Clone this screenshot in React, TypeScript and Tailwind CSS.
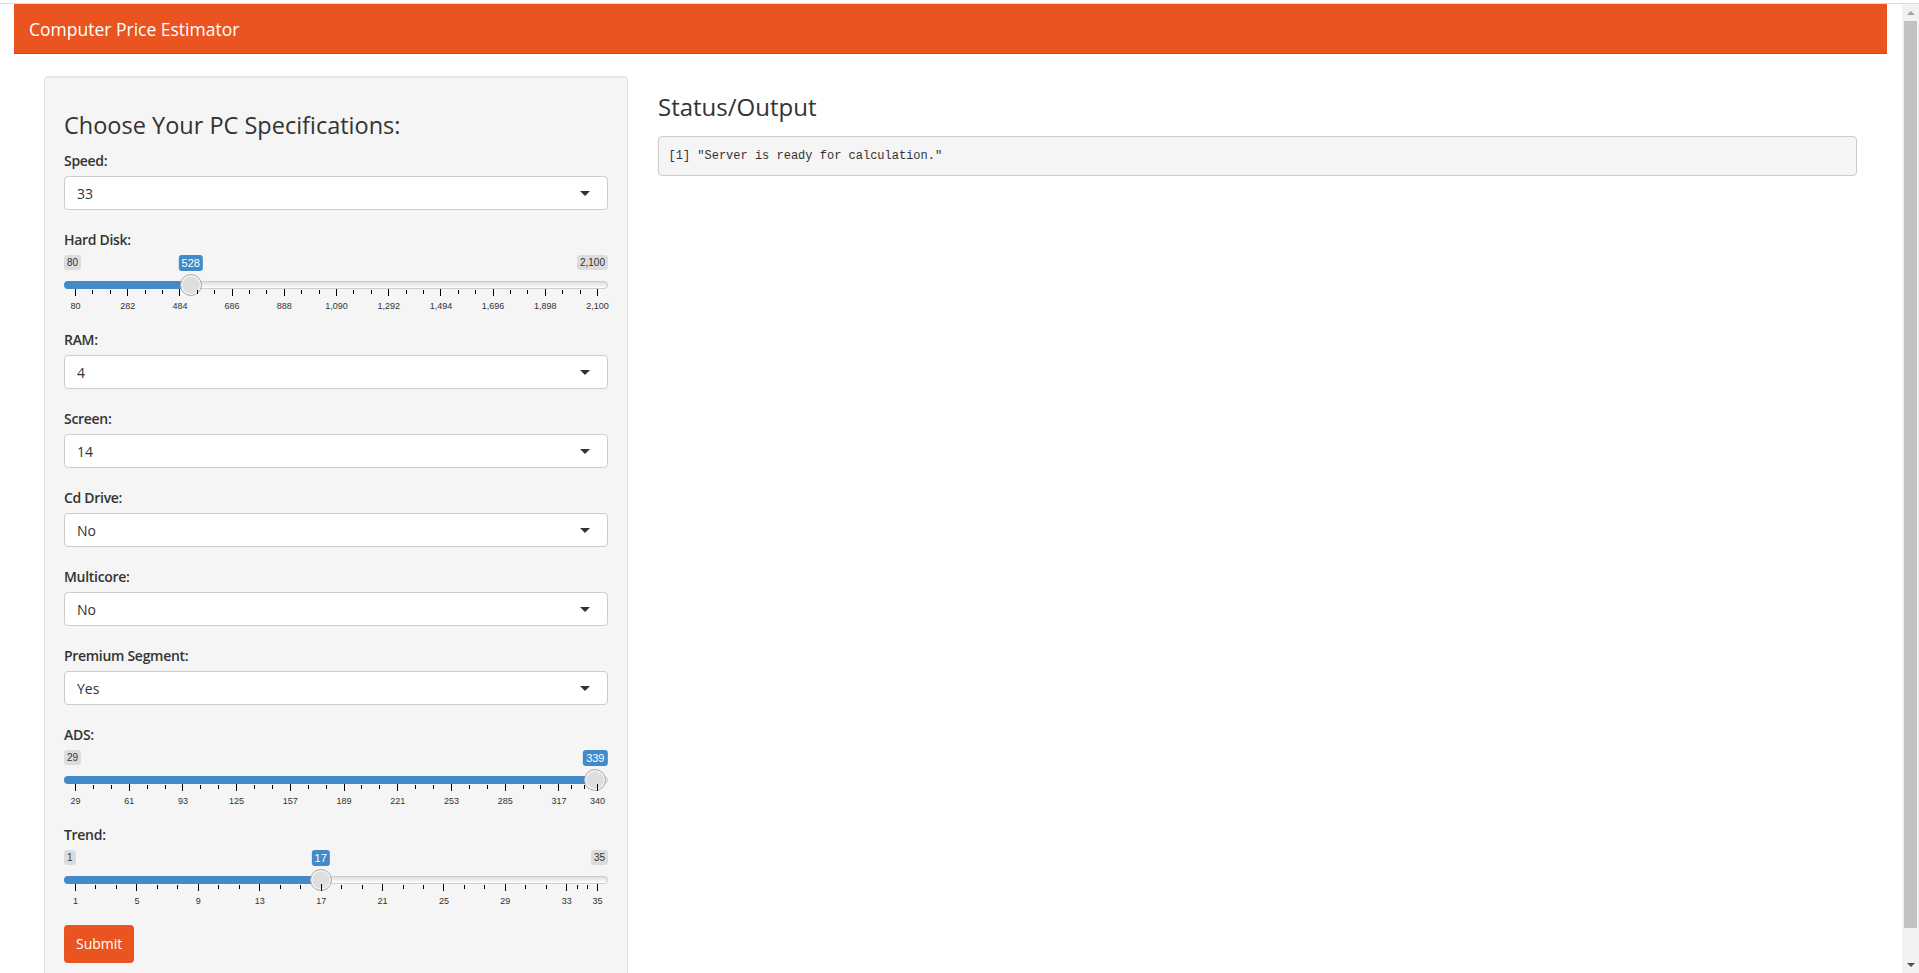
import React from 'react';

const SANS = { fontFamily: '"Open Sans", "Liberation Sans", sans-serif' };

type SliderProps = {
  min: number;
  max: number;
  value: number;
  majors: number[];
  hideMax?: boolean;
};

const fmt = (v: number) => v.toLocaleString('en-US');

function RangeSlider({ min, max, value, majors, hideMax }: SliderProps) {
  const width = 544;
  const pad = 11;
  const pos = (v: number) => pad + ((v - min) / (max - min)) * (width - pad * 2);
  const hx = pos(value);

  const minors: number[] = [];
  for (let i = 0; i < majors.length - 1; i++) {
    const a = pos(majors[i]);
    const b = pos(majors[i + 1]);
    minors.push(a + (b - a) / 3, a + ((b - a) * 2) / 3);
  }

  return (
    <div className="relative h-[60px] w-[544px]" style={{ fontFamily: '"Liberation Sans", Arial, sans-serif' }}>
      <span className="absolute left-0 top-0 rounded-[3px] bg-black/10 px-[3px] py-[1px] text-[10px] leading-[13.3px] text-[#333]">
        {fmt(min)}
      </span>
      {!hideMax && (
        <span className="absolute right-0 top-0 rounded-[3px] bg-black/10 px-[3px] py-[1px] text-[10px] leading-[13.3px] text-[#333]">
          {fmt(max)}
        </span>
      )}
      <span
        className="absolute top-0 -translate-x-1/2 rounded-[3px] bg-[#428bca] px-[3px] py-[1px] text-[11px] leading-[14px] text-white"
        style={{ left: hx }}
      >
        {fmt(value)}
      </span>

      <div className="absolute left-0 right-0 top-[26px] h-[8px] rounded-full border border-[#ccc] bg-gradient-to-b from-[#dedede] to-white" />
      <div className="absolute left-0 top-[26px] h-[8px] rounded-l-full bg-[#428bca]" style={{ width: hx }} />
      <div
        className="absolute top-[19px] h-[22px] w-[22px] -translate-x-1/2 rounded-full border border-[#ababab] bg-[#dedede] shadow-[inset_0_0_1px_1px_#fff]"
        style={{ left: hx }}
      />

      {majors.map((m) => (
        <React.Fragment key={m}>
          <div className="absolute top-[34px] h-[7px] w-px bg-black" style={{ left: pos(m) }} />
          <span
            className="absolute top-[46px] -translate-x-1/2 text-[9px] leading-[10px] text-[#333]"
            style={{ left: pos(m) + 0.5 }}
          >
            {fmt(m)}
          </span>
        </React.Fragment>
      ))}
      {minors.map((x, i) => (
        <div key={i} className="absolute top-[35px] h-[4px] w-px bg-black" style={{ left: Math.round(x) }} />
      ))}
    </div>
  );
}

function SelectBox({ value }: { value: string }) {
  return (
    <div className="relative flex h-[34px] items-center rounded border border-[#ccc] bg-white px-3 text-[14px] text-[#333]">
      {value}
      <span className="absolute right-[17px] top-[14px] h-0 w-0 border-x-[5px] border-t-[5px] border-x-transparent border-t-[#333]" />
    </div>
  );
}

function Field({ label, children, slider }: { label: string; children: React.ReactNode; slider?: boolean }) {
  return (
    <div className={slider ? 'mb-[15px]' : 'mb-[20px]'}>
      <label className="mb-[5px] block text-[14px] font-semibold leading-5 tracking-[-0.3px] text-[#333]">{label}</label>
      {children}
    </div>
  );
}

const seq = (start: number, stepBy: number, end: number) => {
  const out: number[] = [];
  for (let v = start; v < end; v += stepBy) out.push(v);
  out.push(end);
  return out;
};

export default function App() {
  return (
    <div className="h-[973px] w-[1919px] overflow-hidden bg-white" style={SANS}>
      <div className="h-[4px] border-b border-[#dadada]" />
      <div className="flex h-[969px]">
        <div className="flex-1 overflow-hidden">
          <div className="pl-[14px] pr-[15px]">
            <nav className="flex h-[50px] items-center border-b border-[#d34615] bg-[#e95420] px-[15px]">
              <span className="text-[17.5px] leading-5 text-white">Computer Price Estimator</span>
            </nav>
          </div>

          <div className="flex gap-[30px] pl-[44px] pr-[45px] pt-[22px]">
            <aside className="w-[584px] shrink-0 rounded border border-[#e3e3e3] bg-[#f5f5f5] px-[19px] pt-[19px] pb-[40px] shadow-[inset_0_1px_1px_rgba(0,0,0,0.05)]">
              <h3 className="mb-[12px] mt-[16px] text-[23.5px] leading-[27px] text-[#333]">Choose Your PC Specifications:</h3>

              <Field label="Speed:">
                <SelectBox value="33" />
              </Field>
              <Field label="Hard Disk:" slider>
                <RangeSlider min={80} max={2100} value={528} majors={seq(80, 202, 2100)} />
              </Field>
              <Field label="RAM:">
                <SelectBox value="4" />
              </Field>
              <Field label="Screen:">
                <SelectBox value="14" />
              </Field>
              <Field label="Cd Drive:">
                <SelectBox value="No" />
              </Field>
              <Field label="Multicore:">
                <SelectBox value="No" />
              </Field>
              <Field label="Premium Segment:">
                <SelectBox value="Yes" />
              </Field>
              <Field label="ADS:" slider>
                <RangeSlider min={29} max={340} value={339} majors={seq(29, 32, 340)} hideMax />
              </Field>
              <Field label="Trend:" slider>
                <RangeSlider min={1} max={35} value={17} majors={seq(1, 4, 35)} />
              </Field>

              <button className="h-[38px] rounded bg-[#e95420] px-3 text-[14px] leading-5 text-white">Submit</button>
            </aside>

            <main className="min-w-0 flex-1">
              <h3 className="mb-[16px] mt-[17px] text-[24px] leading-[27px] text-[#333]">Status/Output</h3>
              <pre
                className="rounded border border-[#ccc] bg-[#f5f5f5] p-[9.5px] text-[12px] leading-[18.5px] text-[#333]"
                style={{ fontFamily: '"Liberation Mono", monospace' }}
              >
                [1] "Server is ready for calculation."
              </pre>
            </main>
          </div>
        </div>

        <div className="flex w-[17px] shrink-0 flex-col items-center bg-[#f1f1f1]">
          <div className="flex h-[17px] items-center justify-center">
            <span className="h-0 w-0 border-x-[4px] border-b-[4px] border-x-transparent border-b-[#a3a3a3]" />
          </div>
          <div className="h-[907px] w-[13px] bg-[#c1c1c1]" />
          <div className="flex-1" />
          <div className="flex h-[17px] items-center justify-center">
            <span className="h-0 w-0 border-x-[4px] border-t-[4px] border-x-transparent border-t-[#505050]" />
          </div>
        </div>
      </div>
    </div>
  );
}
